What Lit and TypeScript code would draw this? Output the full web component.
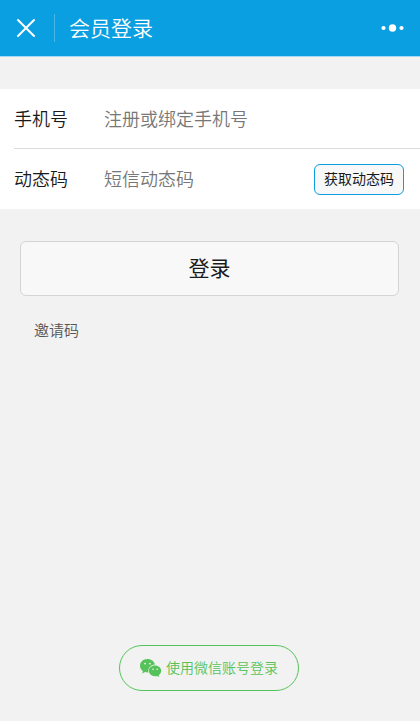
import { LitElement, html, css } from "lit";
import { customElement, state } from "lit/decorators.js";

@customElement("app-root")
export class AppRoot extends LitElement {
  @state() private phone = "";
  @state() private code = "";

  static styles = css`
    :host {
      display: flex;
      flex-direction: column;
      min-height: 100vh;
      background: #f2f2f2;
      color: #1a1a1a;
      font-family: "Noto Sans CJK SC", "Liberation Sans", sans-serif;
      font-weight: 350;
    }
    * {
      box-sizing: border-box;
    }
    button,
    input {
      margin: 0;
      padding: 0;
      border: 0;
      background: none;
      color: inherit;
      font: inherit;
    }
    button {
      cursor: pointer;
    }
    svg {
      display: block;
    }
    .bar {
      display: flex;
      align-items: center;
      height: 57px;
      padding: 0 16px;
      background: #0a9fe0;
      border-bottom: 1px solid #a4daf3;
      color: #fff;
    }
    .title {
      flex: 1;
      margin: 0 0 0 14px;
      padding: 0 0 2px 14px;
      border-left: 1px solid #47b7e8;
      font-size: 21px;
      line-height: 26px;
      font-weight: 350;
    }
    .close {
      padding: 0 9px 0 0;
      margin-right: -5px;
    }
    .form {
      display: flex;
      flex-direction: column;
    }
    .fields {
      margin-top: 32px;
      padding-left: 14px;
      background: #fff;
    }
    .row {
      display: flex;
      align-items: center;
      height: 60px;
      padding-right: 16px;
      font-size: 18px;
      line-height: 26px;
    }
    .row:first-child {
      border-bottom: 1px solid #dcdcdc;
    }
    .label {
      width: 90px;
      flex: none;
      padding-bottom: 2px;
    }
    .input {
      flex: 1;
      min-width: 0;
      outline: 0;
      height: 28px;
      padding-bottom: 2px;
    }
    .input::placeholder {
      color: #777;
      opacity: 1;
    }
    .get-code {
      flex: none;
      width: 90px;
      height: 31px;
      padding-bottom: 2px;
      border: 1px solid #0a9fe0;
      border-radius: 6px;
      background: #f8f8f8;
      font-size: 14px;
      line-height: 26px;
      font-weight: 400;
    }
    .login {
      height: 55px;
      margin: 32px 21px 0 20px;
      padding-bottom: 4px;
      border: 1px solid #d4d4d4;
      border-radius: 6px;
      background: #f8f8f8;
      font-size: 21px;
      line-height: 26px;
      font-weight: 400;
    }
    .invite {
      align-self: flex-start;
      margin: 21px 34px;
      color: #555;
      font-size: 15px;
      line-height: 26px;
      text-decoration: none;
    }
    .footer {
      display: flex;
      justify-content: center;
      margin-top: auto;
      padding: 0 2px 30px 0;
    }
    .wechat {
      display: flex;
      align-items: center;
      gap: 4px;
      height: 46px;
      padding: 0 20px;
      border: 1px solid #55c35a;
      border-radius: 24px;
      color: #55c35a;
      font-size: 14px;
      line-height: 26px;
    }
    .wechat-text {
      padding-bottom: 2px;
    }
  `;

  private onPhone(e: Event) {
    this.phone = (e.target as HTMLInputElement).value;
  }

  private onCode(e: Event) {
    this.code = (e.target as HTMLInputElement).value;
  }

  render() {
    return html`
      <header class="bar">
        <button class="close" type="button" aria-label="关闭">
          <svg width="20" height="20" viewBox="0 0 20 20" fill="none" stroke="#fff" stroke-width="2" stroke-linecap="round">
            <path d="M2 2 18 18M18 2 2 18" />
          </svg>
        </button>
        <h1 class="title">会员登录</h1>
        <button type="button" aria-label="更多">
          <svg width="24" height="12" viewBox="0 0 24 12" fill="#fff">
            <circle cx="3.500" cy="6" r="2.100" />
            <circle cx="12.500" cy="6" r="3.700" />
            <circle cx="21.500" cy="6" r="2.100" />
          </svg>
        </button>
      </header>
      <form class="form" @submit=${(e: Event) => e.preventDefault()}>
        <div class="fields">
          <div class="row">
            <label class="label" for="phone">手机号</label>
            <input class="input" id="phone" type="tel" placeholder="注册或绑定手机号" .value=${this.phone} @input=${this.onPhone} />
          </div>
          <div class="row">
            <label class="label" for="code">动态码</label>
            <input class="input" id="code" type="text" inputmode="numeric" placeholder="短信动态码" .value=${this.code} @input=${this.onCode} />
            <button class="get-code" type="button">获取动态码</button>
          </div>
        </div>
        <button class="login" type="submit">登录</button>
        <a class="invite" href="#invite">邀请码</a>
      </form>
      <footer class="footer">
        <button class="wechat" type="button">
          <svg width="22" height="18" viewBox="0 0 22 18" aria-hidden="true">
            <path fill="#55c35a" d="M7.500 0C3.200 0 0 2.900 0 6.700c0 2.200 1.100 4 2.900 5.200L2.200 14.600l2.900-1.500c.8.200 1.600.400 2.400.400h.8C7.700 9.300 10.700 5.600 14.800 5.600h.2C14.300 2.300 11.200 0 7.500 0Z" />
            <path fill="#55c35a" d="M15 6.400c-3.500 0-6.200 2.400-6.200 5.400s2.700 5.400 6.200 5.400c.7 0 1.400-.1 2-.3l2.200 1.100-.5-1.800c1.500-1 2.500-2.600 2.500-4.400C21.200 8.800 18.500 6.400 15 6.400Z" />
            <g fill="#f2f2f2">
              <circle cx="5" cy="4.600" r=".9" />
              <circle cx="10" cy="4.600" r=".9" />
              <circle cx="13" cy="10.200" r=".8" />
              <circle cx="17.200" cy="10.200" r=".8" />
            </g>
          </svg>
          <span class="wechat-text">使用微信账号登录</span>
        </button>
      </footer>
    `;
  }
}
